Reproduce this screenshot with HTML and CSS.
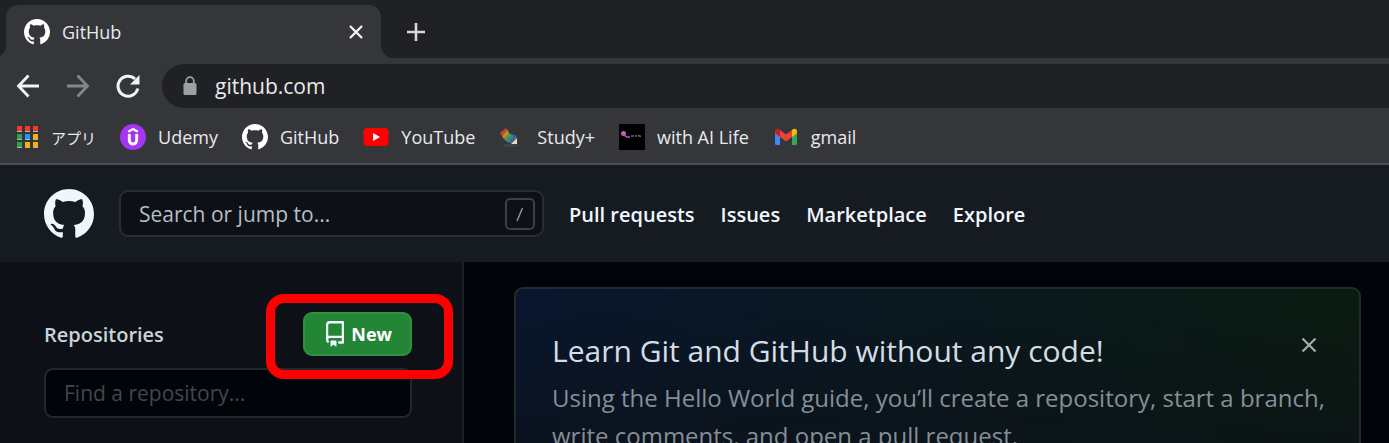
FILE: index.html
```
<!DOCTYPE html>
<html lang="en">
<head>
    <meta charset="UTF-8">
    <meta name="viewport" content="width=device-width, initial-scale=1.0">
    <title>GitHub</title>
    <link rel="stylesheet" href="styles.css">
</head>
<body>
    <svg class="defs" width="0" height="0" aria-hidden="true">
        <symbol id="mark" viewBox="0 0 16 16">
            <path d="M8 0C3.58 0 0 3.58 0 8c0 3.54 2.29 6.53 5.47 7.59.4.07.55-.17.55-.38 0-.19-.01-.82-.01-1.49-2.01.37-2.53-.49-2.69-.94-.09-.23-.48-.94-.82-1.13-.28-.15-.68-.52-.01-.53.63-.01 1.08.58 1.23.82.72 1.21 1.87.87 2.33.66.07-.52.28-.87.51-1.07-1.78-.2-3.64-.89-3.64-3.95 0-.87.31-1.59.82-2.15-.08-.2-.36-1.02.08-2.12 0 0 .67-.21 2.2.82.64-.18 1.32-.27 2-.27s1.36.09 2 .27c1.53-1.04 2.2-.82 2.2-.82.44 1.1.16 1.92.08 2.12.51.56.82 1.27.82 2.15 0 3.07-1.87 3.75-3.65 3.95.29.25.54.73.54 1.48 0 1.07-.01 1.93-.01 2.2 0 .21.15.46.55.38A8.01 8.01 0 0 0 16 8c0-4.42-3.58-8-8-8z" fill="currentColor"/>
        </symbol>
    </svg>

    <div class="tab-strip">
        <div class="tab">
            <svg class="favicon" aria-hidden="true"><use href="#mark"/></svg>
            <span class="tab-title">GitHub</span>
            <button class="icon-btn" aria-label="Close tab">
                <svg width="14" height="14" viewBox="0 0 14 14"><path d="M1 1l12 12M13 1L1 13" stroke="#f1f3f4" stroke-width="2.4"/></svg>
            </button>
        </div>
        <button class="icon-btn new-tab" aria-label="New tab">
            <svg width="20" height="20" viewBox="0 0 20 20"><path d="M10 1v18M1 10h18" stroke="#d5d7da" stroke-width="2.6"/></svg>
        </button>
    </div>

    <div class="toolbar">
        <button class="icon-btn" aria-label="Back">
            <svg width="24" height="24" viewBox="0 0 24 24" fill="none" stroke="#f1f3f4" stroke-width="2.8"><path d="M23 12H3M12.5 1.5L2.5 12l10 10.5"/></svg>
        </button>
        <button class="icon-btn" aria-label="Forward">
            <svg width="24" height="24" viewBox="0 0 24 24" fill="none" stroke="#85868a" stroke-width="2.8"><path d="M1 12h20M11.5 1.5l10 10.5-10 10.5"/></svg>
        </button>
        <button class="icon-btn" aria-label="Reload">
            <svg width="24" height="24" viewBox="0 0 24 24"><path d="M21.8 14.5A10 10 0 1 1 19 5" fill="none" stroke="#f1f3f4" stroke-width="3"/><path d="M23.5 1v9.5H14z" fill="#f1f3f4"/></svg>
        </button>
        <div class="address">
            <svg width="14" height="20" viewBox="0 0 14 20"><path d="M3.2 8V5a3.8 3.8 0 0 1 7.6 0v3" fill="none" stroke="#9aa0a6" stroke-width="1.8"/><rect x="0.5" y="7" width="13" height="12" rx="1.5" fill="#9aa0a6"/></svg>
            <input type="text" value="github.com" aria-label="Address">
        </div>
    </div>

    <nav class="bookmarks">
        <a href="#" class="apps">
            <svg width="22" height="22" viewBox="0 0 22 22">
                <g fill="#f4392f"><rect width="5" height="5"/><rect x="8" width="5" height="5"/><rect x="16" width="5" height="5"/></g>
                <g fill="#2ba24c"><rect y="8" width="5" height="5"/><rect y="16" width="5" height="5"/></g>
                <rect x="8" y="8" width="5" height="5" fill="#2196f3"/>
                <g fill="#fbae0a"><rect x="16" y="8" width="5" height="5"/><rect x="8" y="16" width="5" height="5"/><rect x="16" y="16" width="5" height="5"/></g>
                <path d="M0 5.5h5m3 0h5m3 0h5M0 13.5h5m3 0h5m3 0h5M0 21.5h5m3 0h5m3 0h5" stroke="#b4b4b0"/>
            </svg>
            アプリ
        </a>
        <a href="#">
            <svg viewBox="0 0 26 26"><circle cx="13" cy="13" r="13" fill="#a435f0"/><path d="M8.2 7.8L13 5l4.8 2.8" fill="none" stroke="#fff" stroke-width="2.2"/><path d="M9.3 10v6.3c0 5 7.4 5 7.4 0V10" fill="none" stroke="#fff" stroke-width="2.9"/></svg>
            Udemy
        </a>
        <a href="#">
            <svg><use href="#mark"/></svg>
            GitHub
        </a>
        <a href="#">
            <svg viewBox="0 0 26 26"><rect x="0.5" y="4" width="25" height="18" rx="4" fill="#f00"/><path d="M10 9l7 4-7 4z" fill="#fff"/></svg>
            YouTube
        </a>
        <a href="#">
            <svg viewBox="0 0 26 26">
                <ellipse cx="11" cy="21.5" rx="8" ry="1.5" fill="#434448"/>
                <path d="M1 9l6-5 2 3-6 5z" fill="#c8452f"/>
                <path d="M3 12l6-6 1 4-5 5z" fill="#b99032"/>
                <path d="M5 15l5-6 3 2-6 6z" fill="#579b49"/>
                <path d="M7 17l6-7 2 2-5 7z" fill="#348690"/>
                <path d="M10 19l6-9 2 4-5 5z" fill="#35679c"/>
                <path d="M12 20l6-6v6z" fill="#f6d8ac"/>
            </svg>
            Study+
        </a>
        <a href="#">
            <svg viewBox="0 0 26 26"><rect width="26" height="26"/><circle cx="4.5" cy="9.5" r="2.5" fill="#c45fc0"/><path d="M5 11l3 2h3" fill="none" stroke="#a665a8" stroke-width="1.5"/><path d="M12 12h3m1 0h2m1-0.5l3 1" stroke="#706870" stroke-width="1.5"/></svg>
            with AI Life
        </a>
        <a href="#">
            <svg viewBox="0 0 26 26"><path d="M2 8l5 3.5V21H3.5A1.5 1.5 0 0 1 2 19.5z" fill="#4285f4"/><path d="M19 11.5L24 8v11.5a1.5 1.5 0 0 1-1.5 1.5H19z" fill="#34a853"/><path d="M7 6v7l6 4.5 6-4.5V6l-6 4.5z" fill="#ea4335"/><path d="M2 7.5C2 4.5 5 4 7 6v7L2 9.2z" fill="#c5221f"/><path d="M24 7.5c0-3-3-3.5-5-1.5v7l5-3.8z" fill="#fbbc04"/></svg>
            gmail
        </a>
    </nav>

    <header class="site-header">
        <a href="#" class="logo" aria-label="Homepage"><svg><use href="#mark"/></svg></a>
        <div class="search">
            <input type="text" placeholder="Search or jump to..." aria-label="Search or jump to">
            <svg width="30" height="32" viewBox="0 0 30 32" fill="none"><rect x="1" y="1" width="28" height="30" rx="4" stroke="#3b4046" stroke-width="2"/><path d="M17.5 10l-5.5 13" stroke="#8b949e" stroke-width="1.5"/></svg>
        </div>
        <nav class="site-nav">
            <a href="#">Pull requests</a>
            <a href="#">Issues</a>
            <a href="#">Marketplace</a>
            <a href="#">Explore</a>
        </nav>
    </header>

    <div class="content">
        <aside class="sidebar">
            <div class="repo-head">
                <h2>Repositories</h2>
                <div class="new-wrap">
                    <button class="new-btn">
                        <svg width="24" height="26" viewBox="0 0 16 16" preserveAspectRatio="none" fill="#f0f6fc"><path d="M2 2.5A2.5 2.5 0 0 1 4.5 0h8.75a.75.75 0 0 1 .75.75v12.5a.75.75 0 0 1-.75.75h-2.5a.75.75 0 0 1 0-1.5h1.75v-2h-8a1 1 0 0 0-.714 1.7.75.75 0 0 1-1.072 1.05A2.495 2.495 0 0 1 2 11.5zm10.5-1h-8a1 1 0 0 0-1 1v6.708A2.486 2.486 0 0 1 4.5 9h8zM5 12.25a.25.25 0 0 1 .25-.25h3.5a.25.25 0 0 1 .25.25v3.25a.25.25 0 0 1-.4.2l-1.45-1.087a.25.25 0 0 0-.3 0L5.4 15.7a.25.25 0 0 1-.4-.2z"/></svg>
                        New
                    </button>
                    <span class="highlight"></span>
                </div>
            </div>
            <input type="text" class="repo-filter" placeholder="Find a repository..." aria-label="Find a repository">
        </aside>

        <main class="feed">
            <section class="guide">
                <div class="guide-head">
                    <h1>Learn Git and GitHub without any code!</h1>
                    <button class="icon-btn" aria-label="Dismiss">
                        <svg width="16" height="16" viewBox="0 0 16 16"><path d="M1.5 1.5l13 13M14.5 1.5l-13 13" stroke="#a3abb3" stroke-width="2.2"/></svg>
                    </button>
                </div>
                <p>Using the Hello World guide, you’ll create a repository, start a branch, write comments, and open a pull request.</p>
            </section>
        </main>
    </div>
</body>
</html>
```
FILE: styles.css
```
* {
    box-sizing: border-box;
}

body {
    margin: 0;
    height: 100vh;
    overflow: hidden;
    display: flex;
    flex-direction: column;
    background-color: #010409;
    color: #e8eaed;
    font-family: "Open Sans", "Noto Sans CJK JP", sans-serif;
    font-size: 20px;
}

a {
    color: inherit;
    text-decoration: none;
}

input {
    min-width: 0;
    font-family: inherit;
    font-size: 21px;
}

.defs {
    position: absolute;
}

.icon-btn {
    display: flex;
    padding: 0;
    border: none;
    background: none;
    cursor: pointer;
}

/* browser tabs */
.tab-strip {
    display: flex;
    align-items: center;
    flex: none;
    height: 58px;
    padding: 5px 6px 0;
    background-color: #202124;
}

.tab {
    position: relative;
    display: flex;
    align-items: center;
    width: 375px;
    height: 53px;
    padding: 0 18px;
    border-radius: 12px 12px 0 0;
    background-color: #35363a;
}

.tab::before,
.tab::after {
    content: "";
    position: absolute;
    bottom: 0;
    width: 12px;
    height: 12px;
}

.tab::before {
    left: -12px;
    background: radial-gradient(circle at 0 0, #202124 12px, #35363a 12px);
}

.tab::after {
    right: -12px;
    background: radial-gradient(circle at 100% 0, #202124 12px, #35363a 12px);
}

.favicon {
    width: 26px;
    height: 26px;
    color: #fff;
}

.tab-title {
    flex: 1;
    margin-left: 12px;
    font-size: 18px;
}

.new-tab {
    margin-left: 25px;
}

/* toolbar */
.toolbar {
    display: flex;
    align-items: center;
    gap: 26px;
    flex: none;
    height: 56px;
    padding-left: 16px;
    background-color: #35363a;
}

.address {
    display: flex;
    align-items: center;
    gap: 18px;
    flex: 1;
    height: 44px;
    margin-left: -4px;
    padding-left: 21px;
    border-radius: 22px 0 0 22px;
    background-color: #202124;
}

.address input {
    flex: 1;
    padding: 0;
    border: none;
    background: none;
    color: #e8eaed;
}

/* bookmarks */
.bookmarks {
    display: flex;
    gap: 24px;
    flex: none;
    height: 51px;
    padding: 0 17px;
    border-bottom: 2px solid #4d4e52;
    background-color: #35363a;
    font-size: 18px;
}

.bookmarks a {
    display: flex;
    align-items: center;
    gap: 12px;
    height: 46px;
}

.bookmarks svg {
    width: 26px;
    height: 26px;
    color: #fff;
}

.bookmarks .apps {
    font-size: 15px;
}

.bookmarks .apps svg {
    width: 22px;
    height: 22px;
}

/* site header */
.site-header {
    display: flex;
    align-items: center;
    flex: none;
    height: 97px;
    padding: 0 44px;
    background-color: #161b22;
}

.logo {
    display: flex;
    margin-right: 25px;
    color: #f0f6fc;
}

.logo svg {
    width: 50px;
    height: 50px;
}

.search {
    display: flex;
    align-items: center;
    width: 425px;
    height: 47px;
    padding: 0 7px 0 18px;
    border: 2px solid #282d34;
    border-radius: 9px;
    background-color: #0d1117;
}

.search input {
    flex: 1;
    padding: 0;
    border: none;
    background: none;
}

.search input::placeholder {
    color: #b7bec6;
}

.site-nav {
    display: flex;
    gap: 26px;
    margin-left: 25px;
    padding-top: 2px;
    color: #f0f6fc;
    font-weight: 600;
}

/* page */
.content {
    display: flex;
    flex: 1;
    min-height: 0;
    overflow: hidden;
}

.sidebar {
    width: 464px;
    padding: 50px 50px 0 44px;
    border-right: 2px solid #1b2027;
    background-color: #0d1117;
}

.repo-head {
    display: flex;
    align-items: center;
    justify-content: space-between;
    margin-bottom: 12px;
}

.repo-head h2 {
    margin: 0;
    color: #c9d1d9;
    font-size: 20px;
    font-weight: 600;
}

.new-wrap {
    position: relative;
}

.new-btn {
    display: flex;
    align-items: center;
    gap: 4px;
    height: 44px;
    padding: 0 18px;
    border: 2px solid #2f9040;
    border-radius: 9px;
    background-color: #238636;
    color: #fff;
    font-family: inherit;
    font-size: 18px;
    font-weight: 700;
    cursor: pointer;
}

.highlight {
    position: absolute;
    inset: -18px -41px -23px -37px;
    border: 9px solid #f00;
    border-radius: 18px;
    pointer-events: none;
}

.repo-filter {
    display: block;
    width: 100%;
    height: 50px;
    padding: 0 18px;
    border: 2px solid #22272e;
    border-radius: 9px;
    background-color: #010409;
    color: #c9d1d9;
}

.repo-filter::placeholder {
    color: #40474f;
}

.feed {
    flex: 1;
    padding: 25px 28px 0 50px;
}

.guide {
    padding: 38px 24px 38px 36px;
    border: 2px solid #22292f;
    border-radius: 9px;
    background: linear-gradient(to bottom, transparent, #0d1117 240px), linear-gradient(to right, #08162f, #0a1c10);
}

.guide-head {
    display: flex;
    align-items: flex-start;
    justify-content: space-between;
    padding-right: 18px;
}

.guide-head .icon-btn {
    margin-top: 10px;
}

.guide h1 {
    margin: 0;
    color: #d5dce3;
    font-size: 30px;
    font-weight: 400;
    line-height: 48px;
}

.guide p {
    margin: 4px 0 0;
    color: #858e98;
    font-size: 24px;
    line-height: 38px;
}
```
